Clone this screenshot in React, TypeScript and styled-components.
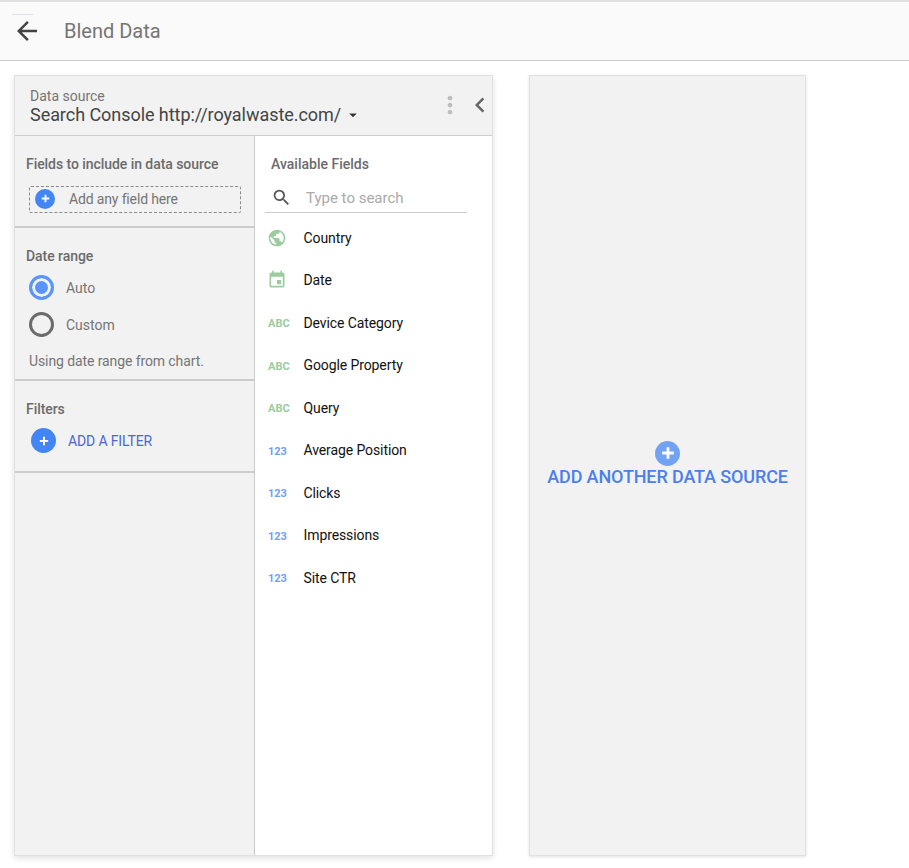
import React from "react";
import styled, { createGlobalStyle } from "styled-components";
import {
    MdArrowBack,
    MdArrowDropDown,
    MdChevronLeft,
    MdEvent,
    MdMoreVert,
    MdPublic,
    MdSearch,
} from "react-icons/md";

const GlobalStyle = createGlobalStyle`
    html, body {
        margin: 0;
        padding: 0;
        background: #fff;
        font-family: Roboto, "Liberation Sans", sans-serif;
    }
`;

const Page = styled.div`
    width: 909px;
    height: 868px;
    overflow: hidden;
    display: flex;
    flex-direction: column;
    border-top: 2px solid #e0e0e0;
    box-sizing: border-box;
`;

const Header = styled.header`
    height: 59px;
    flex: none;
    box-sizing: border-box;
    display: flex;
    align-items: center;
    background: #fafafa;
    border-bottom: 1px solid #ccc;
    padding-left: 12px;
`;

const BackButton = styled.div`
    position: relative;
    width: 30px;
    height: 30px;
    display: flex;
    align-items: center;
    justify-content: center;
    margin-right: 22px;
    color: #444;

    &::before {
        content: "";
        position: absolute;
        top: -2px;
        left: 0;
        width: 21px;
        height: 1px;
        background: #dde3ea;
    }
`;

const Title = styled.h1`
    margin: 0 0 1px;
    font-size: 20px;
    font-weight: 400;
    color: #757575;
`;

const Board = styled.main`
    flex: 1;
    display: flex;
    gap: 36px;
    padding: 14px 0 12px 14px;
    min-height: 0;
`;

const Card = styled.section`
    width: 479px;
    box-sizing: border-box;
    display: flex;
    flex-direction: column;
    background: #fff;
    border: 1px solid #e0e0e0;
    box-shadow: 0 2px 6px rgba(0, 0, 0, 0.12);
`;

const CardHeader = styled.div`
    height: 60px;
    flex: none;
    box-sizing: border-box;
    display: flex;
    align-items: flex-start;
    background: #f2f2f2;
    border-bottom: 1px solid #ccc;
    padding: 12px 0 0 15px;
`;

const SourceInfo = styled.div`
    flex: 1;
    min-width: 0;
`;

const SourceLabel = styled.div`
    font-size: 14px;
    line-height: 16px;
    color: #757575;
`;

const SourceName = styled.div`
    display: flex;
    align-items: center;
    font-size: 18px;
    line-height: 21px;
    letter-spacing: -0.05px;
    color: #444;
`;

const Caret = styled.span`
    display: flex;
    margin-left: 3px;
    margin-top: 1px;
    color: #333;
`;

const HeaderAction = styled.span<{ $color: string; $right: number; $top: number }>`
    display: flex;
    color: ${props => props.$color};
    margin: ${props => props.$top}px ${props => props.$right}px 0 0;
`;

const CardBody = styled.div`
    flex: 1;
    min-height: 0;
    display: flex;
`;

const Sidebar = styled.aside`
    width: 240px;
    flex: none;
    box-sizing: border-box;
    background: #f2f2f2;
    border-right: 1px solid #ccc;
`;

const Section = styled.div<{ $height: number }>`
    height: ${props => props.$height}px;
    box-sizing: border-box;
    padding: 20px 13px 0 11px;
    border-bottom: 2px solid #ccc;
`;

const SectionTitle = styled.div`
    font-size: 14px;
    line-height: 16px;
    font-weight: 500;
    letter-spacing: -0.06px;
    color: #6b6b6b;
`;

const DropZone = styled.div`
    height: 27px;
    margin: 14px 0 0 3px;
    display: flex;
    align-items: center;
    padding: 0 0 2px 5px;
    box-sizing: border-box;
    gap: 14px;
    border: 1px dashed #8a8a8a;
    border-radius: 2px;
    font-size: 14px;
    letter-spacing: -0.15px;
    color: #757575;
`;

const PlusCircle = styled.span<{ $size: number; $opacity?: number }>`
    width: ${props => props.$size}px;
    height: ${props => props.$size}px;
    flex: none;
    display: flex;
    align-items: center;
    justify-content: center;
    border-radius: 50%;
    background: #4285f4;
    color: #fff;
    opacity: ${props => props.$opacity ?? 1};
`;

const RadioRow = styled.div`
    display: flex;
    align-items: center;
    gap: 12px;
    height: 25px;
    margin: 12px 0 0 3px;
    font-size: 14px;
    color: #757575;

    ${SectionTitle} + & {
        margin-top: 11px;
    }
`;

const RadioMark = styled.span<{ $checked?: boolean }>`
    width: 25px;
    height: 25px;
    box-sizing: border-box;
    flex: none;
    border-radius: 50%;
    border: 3px solid ${props => (props.$checked ? "#5a95ff" : "#6b6b6b")};
    background: ${props => (props.$checked ? "#5a95ff" : "transparent")};
    box-shadow: ${props => (props.$checked ? "inset 0 0 0 3px #f2f2f2" : "none")};
`;

const HintText = styled.div`
    margin: 16px 0 0 3px;
    font-size: 14px;
    line-height: 16px;
    letter-spacing: -0.1px;
    color: #757575;
`;

const FilterButton = styled.div`
    display: flex;
    align-items: center;
    gap: 12px;
    margin: 11px 0 0 5px;
    font-size: 14px;
    letter-spacing: -0.15px;
    color: #4a67d6;
`;

const FieldsPanel = styled.div`
    flex: 1;
    min-width: 0;
    padding: 20px 25px 0 10px;
`;

const PanelTitle = styled(SectionTitle)`
    padding-left: 6px;
    letter-spacing: 0;
`;

const SearchBox = styled.div`
    height: 30px;
    margin-top: 11px;
    display: flex;
    align-items: center;
    gap: 14px;
    padding-left: 6px;
    border-bottom: 1px solid #ccc;
    box-sizing: border-box;
    font-size: 15px;
    color: #aaa;
`;

const SearchIcon = styled.span`
    display: flex;
    color: #555;
`;

const FieldList = styled.ul`
    list-style: none;
    margin: 3.8px 0 0;
    padding: 0;
`;

const FieldRow = styled.li`
    height: 42.45px;
    display: flex;
    align-items: center;
    font-size: 14px;
    letter-spacing: -0.1px;
    color: #111;
`;

const FieldIcon = styled.span<{ $color: string }>`
    width: 38.5px;
    flex: none;
    display: flex;
    align-items: center;
    padding-left: 2px;
    box-sizing: border-box;
    color: ${props => props.$color};
`;

const TypeTag = styled.span`
    font-family: Roboto, "Liberation Sans", sans-serif;
    font-size: 11px;
    font-weight: 700;
    letter-spacing: 0;
    line-height: 12px;
    margin: 3px 0 0 1px;
`;

const BlendCard = styled.section`
    width: 277px;
    box-sizing: border-box;
    display: flex;
    flex-direction: column;
    align-items: center;
    justify-content: center;
    padding-bottom: 4px;
    background: #f2f2f2;
    border: 1px solid #e0e0e0;
    box-shadow: 0 1px 3px rgba(0, 0, 0, 0.12);
`;

const BlendLabel = styled.div`
    font-size: 18px;
    line-height: 21px;
    font-weight: 500;
    letter-spacing: -0.13px;
    color: #4a7ff0;
`;

const GREEN = "#9ccc9e";
const BLUE = "#6f9ff5";

const fields = [
    { name: "Country", kind: "geo" },
    { name: "Date", kind: "date" },
    { name: "Device Category", kind: "text" },
    { name: "Google Property", kind: "text" },
    { name: "Query", kind: "text" },
    { name: "Average Position", kind: "number" },
    { name: "Clicks", kind: "number" },
    { name: "Impressions", kind: "number" },
    { name: "Site CTR", kind: "number" },
];

function PlusGlyph({ size }: { size: number }) {
    return (
        <svg width={size} height={size} viewBox="0 0 12 12" fill="none">
            <path d="M6 1v10M1 6h10" stroke="currentColor" strokeWidth="2.4" />
        </svg>
    );
}

function FieldGlyph({ kind }: { kind: string }) {
    if (kind === "geo") return <MdPublic size={20} />;
    if (kind === "date") return <MdEvent size={20} />;
    if (kind === "text") return <TypeTag>ABC</TypeTag>;
    return <TypeTag>123</TypeTag>;
}

export default function App() {
    return (
        <Page>
            <GlobalStyle />
            <Header>
                <BackButton>
                    <MdArrowBack size={30} />
                </BackButton>
                <Title>Blend Data</Title>
            </Header>
            <Board>
                <Card>
                    <CardHeader>
                        <SourceInfo>
                            <SourceLabel>Data source</SourceLabel>
                            <SourceName>
                                Search Console http://royalwaste.com/
                                <Caret>
                                    <MdArrowDropDown size={18} />
                                </Caret>
                            </SourceName>
                        </SourceInfo>
                        <HeaderAction $color="#bdbdbd" $right={1} $top={3}>
                            <MdMoreVert size={28} />
                        </HeaderAction>
                        <HeaderAction $color="#666" $right={-3} $top={2}>
                            <MdChevronLeft size={30} />
                        </HeaderAction>
                    </CardHeader>
                    <CardBody>
                        <Sidebar>
                            <Section $height={92}>
                                <SectionTitle>Fields to include in data source</SectionTitle>
                                <DropZone>
                                    <PlusCircle $size={20}>
                                        <PlusGlyph size={9} />
                                    </PlusCircle>
                                    Add any field here
                                </DropZone>
                            </Section>
                            <Section $height={153}>
                                <SectionTitle>Date range</SectionTitle>
                                <RadioRow>
                                    <RadioMark $checked />
                                    Auto
                                </RadioRow>
                                <RadioRow>
                                    <RadioMark />
                                    Custom
                                </RadioRow>
                                <HintText>Using date range from chart.</HintText>
                            </Section>
                            <Section $height={92}>
                                <SectionTitle>Filters</SectionTitle>
                                <FilterButton>
                                    <PlusCircle $size={25}>
                                        <PlusGlyph size={10} />
                                    </PlusCircle>
                                    ADD A FILTER
                                </FilterButton>
                            </Section>
                        </Sidebar>
                        <FieldsPanel>
                            <PanelTitle>Available Fields</PanelTitle>
                            <SearchBox>
                                <SearchIcon>
                                    <MdSearch size={21} />
                                </SearchIcon>
                                Type to search
                            </SearchBox>
                            <FieldList>
                                {fields.map(field => (
                                    <FieldRow key={field.name}>
                                        <FieldIcon $color={field.kind === "number" ? BLUE : GREEN}>
                                            <FieldGlyph kind={field.kind} />
                                        </FieldIcon>
                                        {field.name}
                                    </FieldRow>
                                ))}
                            </FieldList>
                        </FieldsPanel>
                    </CardBody>
                </Card>
                <BlendCard>
                    <PlusCircle $size={25} $opacity={0.72}>
                        <PlusGlyph size={14} />
                    </PlusCircle>
                    <BlendLabel>ADD ANOTHER DATA SOURCE</BlendLabel>
                </BlendCard>
            </Board>
        </Page>
    );
}
